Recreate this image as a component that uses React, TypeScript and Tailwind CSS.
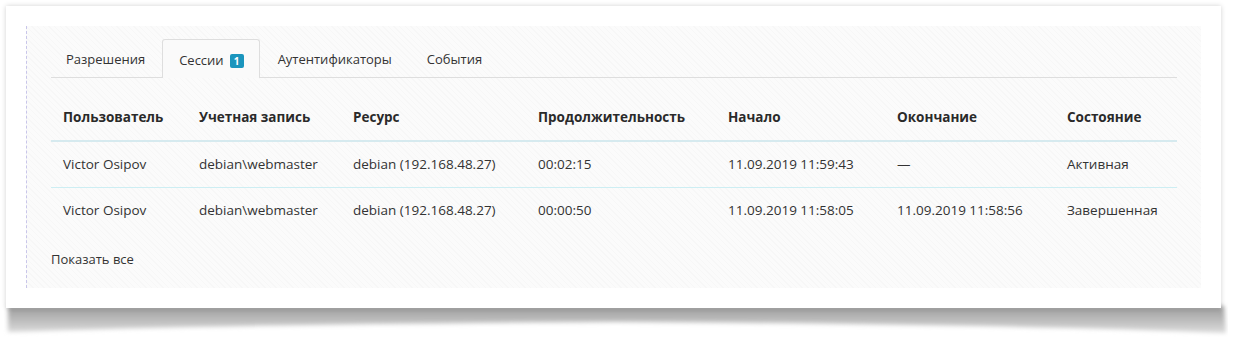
import React from "react";

type Session = {
  user: string;
  account: string;
  resource: string;
  duration: string;
  start: string;
  end: string;
  state: string;
};

const sessions: Session[] = [
  {
    user: "Victor Osipov",
    account: "debian\\webmaster",
    resource: "debian (192.168.48.27)",
    duration: "00:02:15",
    start: "11.09.2019 11:59:43",
    end: "—",
    state: "Активная",
  },
  {
    user: "Victor Osipov",
    account: "debian\\webmaster",
    resource: "debian (192.168.48.27)",
    duration: "00:00:50",
    start: "11.09.2019 11:58:05",
    end: "11.09.2019 11:58:56",
    state: "Завершенная",
  },
];

const columns = [
  { title: "Пользователь", w: "w-[136px]" },
  { title: "Учетная запись", w: "w-[154px]" },
  { title: "Ресурс", w: "w-[185px]" },
  { title: "Продолжительность", w: "w-[190px]" },
  { title: "Начало", w: "w-[169px]" },
  { title: "Окончание", w: "w-[170px]" },
  { title: "Состояние", w: "w-[122px]" },
];

function Tabs() {
  return (
    <div className="flex h-[39px] items-end border-b border-[#dedede]">
      <div className="flex h-[38px] items-center pl-[15px] pr-[17px] pt-[3px] text-[13px] text-[#333]">
        Разрешения
      </div>
      <div className="-mb-px flex h-[39px] items-center rounded-t-[3px] border border-b-0 border-[#dedede] bg-[#fafafa] pl-[16px] pr-[15px] pt-[3px] text-[13px] text-[#333]">
        Сессии
        <span className="ml-[6px] flex h-[14px] w-[14px] items-center justify-center rounded-[2px] bg-[#1b95bd] text-[10px] font-bold leading-none text-white">
          1
        </span>
      </div>
      <div className="flex h-[38px] items-center px-[18px] pt-[3px] text-[13px] text-[#333]">
        Аутентификаторы
      </div>
      <div className="flex h-[38px] items-center px-[17px] pt-[3px] text-[13px] text-[#333]">
        События
      </div>
    </div>
  );
}

function SessionsTable() {
  return (
    <table className="mt-[17px] w-[1126px] table-fixed border-collapse text-[13.5px] text-[#333]">
      <thead>
        <tr className="h-[46px] border-b-2 border-[#d6eaef]">
          {columns.map((c) => (
            <th key={c.title} className={`${c.w} px-3 text-left font-bold text-[#2a2a2a]`}>
              {c.title}
            </th>
          ))}
        </tr>
      </thead>
      <tbody>
        {sessions.map((s, i) => (
          <tr key={i} className={`h-[46px] ${i === 0 ? "border-b border-[#cdeef3]" : ""}`}>
            <td className="px-3">{s.user}</td>
            <td className="px-3">{s.account}</td>
            <td className="px-3">{s.resource}</td>
            <td className="px-3">{s.duration}</td>
            <td className="px-3">{s.start}</td>
            <td className="px-3">{s.end}</td>
            <td className="px-3">{s.state}</td>
          </tr>
        ))}
      </tbody>
    </table>
  );
}

export default function App() {
  return (
    <div
      className="h-[337px] w-[1235px] bg-white pl-[6px] pt-[6px]"
      style={{ fontFamily: '"Open Sans", "Noto Sans", sans-serif' }}
    >
      <div className="relative w-[1215px]">
        {/* curled paper shadow under the card */}
        <svg
          className="absolute left-[-4px] top-[290px] h-[45px] w-[1226px]"
          viewBox="0 0 1226 45"
          preserveAspectRatio="none"
        >
          <defs>
            <linearGradient id="shade" x1="0" y1="0" x2="0" y2="1">
              <stop offset="0" stopColor="#9a9a9a" />
              <stop offset="1" stopColor="#dcdcdc" />
            </linearGradient>
            <filter id="soft" x="-5%" y="-50%" width="110%" height="200%">
              <feGaussianBlur stdDeviation="2" />
            </filter>
          </defs>
          <path
            d="M6 10 L1222 10 L1224 37 Q1000 28 613 26 Q226 28 6 36 Z"
            fill="url(#shade)"
            filter="url(#soft)"
          />
        </svg>
        <div className="relative h-[302px] bg-white pl-[20px] pt-[20px] shadow-[0_0_5px_rgba(0,0,0,0.18)]">
          <div className="h-[262px] w-[1175px] border-l border-dashed border-[#c9c6ea] bg-[repeating-linear-gradient(45deg,#f7f7f7_0px,#f7f7f7_1px,#fbfbfb_1px,#fbfbfb_4px)] pl-[24px] pt-[13px]">
            <div className="w-[1126px]">
              <Tabs />
              <SessionsTable />
              <div className="mt-[16px] text-[13px] leading-[20px] text-[#333]">Показать все</div>
            </div>
          </div>
        </div>
      </div>
    </div>
  );
}
